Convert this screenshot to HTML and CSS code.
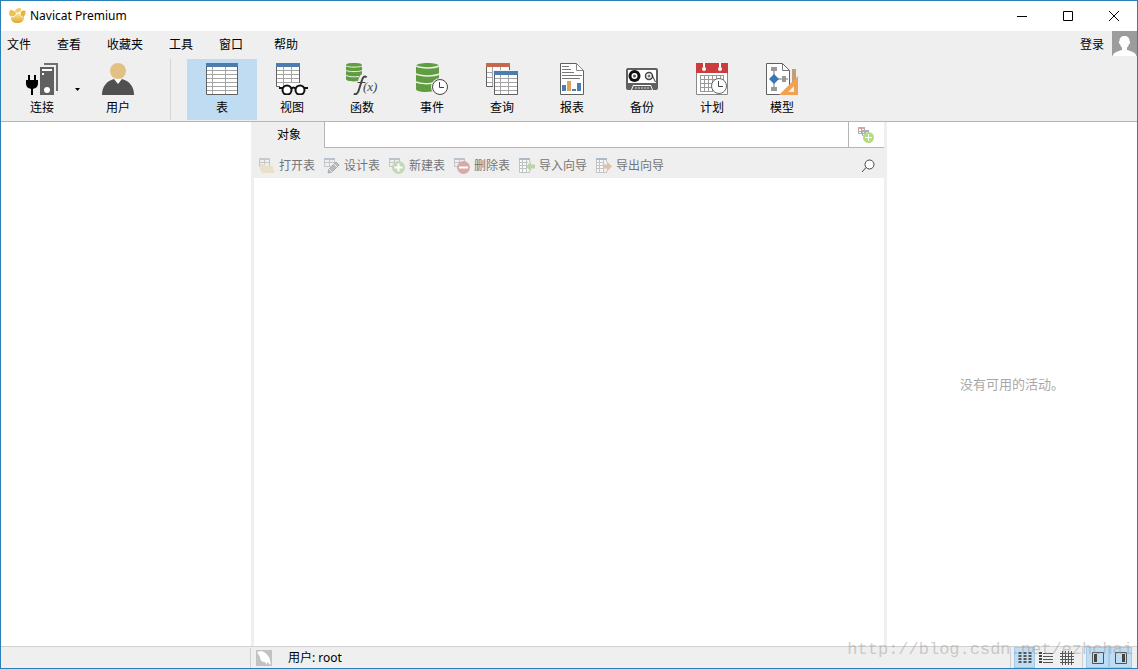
FILE: index.html
```html
<!DOCTYPE html>
<html lang="zh-CN">
<head>
<meta charset="utf-8">
<title>Navicat Premium</title>
<link rel="stylesheet" href="styles.css">
</head>
<body>
<div class="window">
  <header class="titlebar">
    <svg class="app-icon" width="18" height="18" viewBox="0 0 18 18"><defs><linearGradient id="gold" x1="0" y1="0" x2="0" y2="1"><stop offset="0" stop-color="#f8e29a"/><stop offset="1" stop-color="#dfa92c"/></linearGradient></defs><path d="M3 11c0-3 2-4.500 6-4.500s7 1 7 4-2 5.500-6.500 5.500S3 14 3 11z" fill="url(#gold)"/><path d="M2.500 9.500C.500 8 .500 4.500 2.500 3c3 0 5.500 2 5.500 4-1 2-3 2.500-5.500 2.500z" fill="#edc252"/><path d="M7 4C8 1.500 11 .500 13 1.500c.500 2.500-1.500 4-4 4C8 5.500 7 5 7 4z" fill="#f1cd67"/><path d="M12.500 6c.500-2.500 3-3 5-2 .500 2.500-.500 5-2.500 6-2-.500-3-2-2.500-4z" fill="#e5b440"/><path d="M3 9.700c3 .300 5-1 5.500-2.700M12 6c0 2 1 3.500 3 4.500" fill="none" stroke="#fff8dd"/></svg>
    <h1 class="app-title">Navicat Premium</h1>
    <div class="window-controls">
      <button class="window-button" aria-label="最小化"><svg width="12" height="12" viewBox="0 0 12 12"><path d="M1 6.500h10" stroke="#000"/></svg></button>
      <button class="window-button" aria-label="最大化"><svg width="12" height="12" viewBox="0 0 12 12"><path d="M1.500 1.500h9v9h-9z" fill="none" stroke="#000"/></svg></button>
      <button class="window-button" aria-label="关闭"><svg width="12" height="12" viewBox="0 0 12 12"><path d="M1 1l10 10M11 1L1 11" stroke="#000"/></svg></button>
    </div>
  </header>

  <nav class="menubar">
    <button class="menu">文件</button>
    <button class="menu">查看</button>
    <button class="menu">收藏夹</button>
    <button class="menu">工具</button>
    <button class="menu">窗口</button>
    <button class="menu menu-help">帮助</button>
    <button class="login">登录</button>
    <svg class="avatar" width="25" height="25" viewBox="0 0 25 25"><path fill="#9c9c9c" d="M0 0h25v25H0z"/><path d="M7.500 10C7.500 6.500 9.500 5 12.500 5s5 1.500 5 5c1.200 1 .500 3-.500 3-.500 2-1 3-2 3.500V19c3 1 8 1.500 9.500 6h-24C2 20.500 7 20 10 19v-2.500c-1-.500-1.500-1.500-2-3.500-1 0-1.700-2-.500-3z" fill="#fff"/></svg>
  </nav>

  <div class="toolbar">
    <button class="tool">
      <svg width="32" height="32" viewBox="0 0 32 32"><path d="M18 1h13v27" fill="none" stroke="#707070" stroke-width="2"/><path fill="#606060" d="M14 4h14v28H14z"/><path fill="#fff" d="M16 6h10v2H16zM16 10h2v2h-2z"/><circle cx="21" cy="27" r="3" fill="#fff"/><path d="M2 12h2v5h4v-5h2v5h2v3c0 4-2 5-5 6v6H5v-6c-3-1-5-2-5-6v-3h2z"/></svg>
      <span>连接</span>
    </button>
    <button class="dropdown" aria-label="连接选项"><svg width="5" height="3" viewBox="0 0 5 3"><path d="M0 0h5L2.500 3z"/></svg></button>
    <button class="tool">
      <svg width="32" height="32" viewBox="0 0 32 32"><path fill="#505050" d="M0 32c0-9 5-14 12-16h8c7 2 12 7 12 16z"/><path fill="#fff" d="M12 16h8l-4 5z"/><circle cx="16" cy="8" r="8" fill="#e2c182"/></svg>
      <span>用户</span>
    </button>
    <div class="toolbar-separator"></div>
    <button class="tool tool-active">
      <svg width="32" height="32" viewBox="0 0 32 32"><path fill="#fff" stroke="#606060" d="M.500 2.500h31v29H.500z"/><path stroke="#a5a5a5" d="M6.500 4v27M19.500 4v27M1 7.500h30M1 11.500h30M1 15.500h30M1 19.500h30M1 23.500h30M1 27.500h30"/><path fill="#4c7daf" d="M0 0h32v4H0z"/></svg>
      <span>表</span>
    </button>
    <button class="tool">
      <svg width="32" height="32" viewBox="0 0 32 32"><path fill="#fff" d="M0 2h24v22H0z"/><path d="M7.500 4v19M15.500 4v16M1 7.500h22M1 11.500h22M1 15.500h22M1 19.500h22" stroke="#a5a5a5"/><path d="M.500 3v20.500H4M23.500 3v17" fill="none" stroke="#606060"/><path fill="#4c7daf" d="M0 0h24v4H0z"/><g fill="#fff" stroke="#111" stroke-width="2"><circle cx="11" cy="27" r="4.500"/><circle cx="24" cy="27" r="4.500"/><path d="M3 25h4M15 26c2-2 3-2 5 0M28 25h4" fill="none"/></g></svg>
      <span>视图</span>
    </button>
    <button class="tool">
      <svg width="33" height="32" viewBox="0 0 33 32"><path fill="#609c40" d="M0 2c0-2.700 16-2.700 16 0v9c-2 1-3 3-4 7-6 1-12 0-12-2z"/><path d="M0 3c3 1.500 13 1.500 16 0M0 7.500c3 1.500 13 1.500 16 0M0 12.500c3 1.500 9 1.500 13 1" fill="none" stroke="#efefef"/><path d="M20.500 14.500c-1-2-3.500-1-4.500 2.500l-3.500 11c-1 3-3 4-4.500 2.500" fill="none" stroke="#444" stroke-width="2"/><path d="M11.500 19.500h8" stroke="#444"/><text x="17" y="28" class="formula">(x)</text></svg>
      <span>函数</span>
    </button>
    <button class="tool">
      <svg width="32" height="32" viewBox="0 0 32 32"><path fill="#609c40" d="M0 3c0-4 23-4 23 0v12l-7 7 2 6c-8 2-18 1-18-2z"/><path d="M0 3c4 2.500 19 2.500 23 0M0 11c4 2.500 19 2.500 23 0M0 19c4 2 12 2 17 1" fill="none" stroke="#efefef" stroke-width="1.500"/><circle cx="24" cy="24" r="9" fill="#efefef"/><circle cx="24" cy="24" r="7.500" fill="#fff" stroke="#444"/><path d="M23.500 19v5.500H28" fill="none" stroke="#444"/></svg>
      <span>事件</span>
    </button>
    <button class="tool">
      <svg width="32" height="32" viewBox="0 0 32 32"><path fill="#fff" stroke="#606060" d="M.500 1.500h23v22H.500z"/><path stroke="#a5a5a5" d="M6.500 4v19M14.500 4v19M1 9.500h22M1 14.500h22M1 19.500h22"/><path fill="#c5684e" d="M0 0h24v4H0z"/><path fill="#efefef" d="M7 7h25v25H7z"/><path fill="#fff" stroke="#606060" d="M8.500 9.500h23v22h-23z"/><path stroke="#a5a5a5" d="M14.500 12v19M22.500 12v19M9 15.500h22M9 19.500h22M9 23.500h22M9 27.500h22"/><path fill="#4c7daf" d="M8 8h24v4H8z"/></svg>
      <span>查询</span>
    </button>
    <button class="tool">
      <svg width="24" height="32" viewBox="0 0 24 32"><path fill="#fff" stroke="#606060" d="M.500.500h16l7 7v24H.500z"/><path d="M16.500.500v7h7M17 1l6 6" fill="none" stroke="#888"/><path d="M2 3.500h7M2 6.500h9M2 9.500h12M2 12.500h20M2 15.500h18" stroke="#777"/><path fill="#4c7daf" d="M2 22h4v6H2zM12 26h4v2h-4zM17 20h4v8h-4z"/><path fill="#e2a05c" d="M7 18h4v10H7z"/></svg>
      <span>报表</span>
    </button>
    <button class="tool">
      <svg width="32" height="32" viewBox="0 0 32 32"><rect y="5" width="32" height="22" rx="2" fill="#606060"/><path fill="#fff" d="M2 7h28v13H2z"/><path fill="#fff" d="M5 27l2-5h18l2 5z"/><path fill="#606060" d="M6 27l1.500-4h17l1.500 4z"/><path d="M9 25h15" stroke="#ddd" stroke-dasharray="2 1"/><circle cx="8.500" cy="13" r="6" fill="#111"/><circle cx="8.500" cy="13" r="3" fill="#fff"/><circle cx="8.500" cy="13" r="1.500" fill="#555"/><circle cx="23" cy="13" r="3.500" fill="#fff" stroke="#444" stroke-width="1.500"/><circle cx="23" cy="13" r="1.500" fill="#777"/><path d="M26 12l3.500 7" stroke="#333"/></svg>
      <span>备份</span>
    </button>
    <button class="tool">
      <svg width="32" height="32" viewBox="0 0 32 32"><path fill="#fff" stroke="#888" d="M.500.500h31v31H.500z"/><path fill="#cc3c3d" d="M0 0h32v10H0z"/><path fill="#fff" d="M7 0h2v4H7zM23 0h2v4h-2z"/><circle cx="8" cy="6" r="2" fill="#fff"/><circle cx="24" cy="6" r="2" fill="#fff"/><path d="M4.500 12v17M8.500 12v17M12.500 12v17M16.500 12v17M20.500 12v6M24.500 12v4M27.500 12v5M4 12.500h24M4 16.500h24M4 20.500h13M4 24.500h13M4 28.500h13" stroke="#999"/><circle cx="23" cy="23" r="7.500" fill="#fff" stroke="#666"/><path d="M22.500 18v5.500H27" fill="none" stroke="#444"/></svg>
      <span>计划</span>
    </button>
    <button class="tool">
      <svg width="33" height="32" viewBox="0 0 33 32"><path fill="#fff" stroke="#606060" d="M.500.500h16l7 7v24H.500z"/><path d="M16.500.500v7h7" fill="none" stroke="#777"/><path d="M8 6v22M8 16h14" stroke="#777"/><path fill="#999" d="M5 4h6v4H5zM5 24h6v4H5zM16 13h4v6h-4z"/><path fill="#3976b2" d="M8 11l5 5-5 5-5-5z"/><path fill="#c0a078" d="M26 6h4v14h-4z"/><path fill="#f1a151" d="M13 32L32 13v19z"/><path fill="#efefef" d="M22 29l6-6v6z"/></svg>
      <span>模型</span>
    </button>
  </div>

  <main class="workspace">
    <aside class="connections" aria-label="连接"></aside>
    <section class="objects">
      <div class="tabs">
        <button class="tab">对象</button>
        <div class="tab-space"></div>
        <button class="tab-add" aria-label="新建标签"><svg width="16" height="16" viewBox="0 0 16 16"><path fill="#fff" stroke="#aaa" d="M.500.500h6v6h-6zM4.500 3.500h6v5h-6z"/><path stroke="#aaa" d="M1 4.500h6M3.500 1v5M5 6.500h6M7.500 4v5"/><path stroke="#e1a096" stroke-width="2" d="M0 1h7"/><path stroke="#96b3d0" stroke-width="2" d="M4 4h7"/><circle cx="10.500" cy="10.500" r="5.500" fill="#b5da82"/><path d="M7 10.500h7M10.500 7v7" stroke="#fff"/></svg></button>
      </div>
      <div class="actions">
        <button class="action" disabled><svg width="16" height="16" viewBox="0 0 16 16"><path d="M.500 1.500h10v7H.500zM5.500 1v7M0 4.500h11" fill="none" stroke="#c1c6ca"/><path fill="#c3cbd3" d="M0 0h11v2H0z"/><path fill="#eadfc9" d="M1 6h5l1 2h7v4h1l1 3H3L1 11z"/></svg>打开表</button>
        <button class="action" disabled><svg width="16" height="16" viewBox="0 0 16 16"><path d="M.500 1.500h10v7H.500zM5.500 1v7M0 4.500h11" fill="none" stroke="#c1c6ca"/><path fill="#b8c3ce" d="M0 0h11v2H0z"/><path d="M4 15l1-4 7-7 3 3-7 7z" fill="#bbb" stroke="#aaa"/><path d="M10 6l3 3M5 11l3 3" stroke="#efefef"/></svg>设计表</button>
        <button class="action" disabled><svg width="16" height="16" viewBox="0 0 16 16"><path d="M.500 1.500h10v7H.500zM5.500 1v7M0 4.500h11" fill="none" stroke="#c1c6ca"/><path fill="#b8c3ce" d="M0 0h11v2H0z"/><circle cx="9.500" cy="9.500" r="6.500" fill="#c3d8b6"/><path d="M5.500 9.500h8M9.500 5.500v8" stroke="#fff" stroke-width="2"/></svg>新建表</button>
        <button class="action" disabled><svg width="16" height="16" viewBox="0 0 16 16"><path d="M.500 1.500h10v7H.500zM5.500 1v7M0 4.500h11" fill="none" stroke="#c1c6ca"/><path fill="#b8c3ce" d="M0 0h11v2H0z"/><circle cx="9.500" cy="9.500" r="6.500" fill="#d8a9a9"/><path d="M5 9.500h9" stroke="#fff" stroke-width="2"/></svg>删除表</button>
        <button class="action" disabled><svg width="16" height="16" viewBox="0 0 16 16"><path d="M.500 1.500h10v13H.500zM3.500 1v14M7.500 1v14M0 4.500h10M0 7.500h8M0 10.500h8" fill="#f7f7f7" stroke="#c0c4c7"/><path fill="#aebac6" d="M0 0h11v2H0z"/><path fill="#efefef" d="M9 4h6v9H9z"/><path fill="#bdd1ad" d="M7 8.500L12 3.500v3h4v4h-4v3z"/></svg>导入向导</button>
        <button class="action" disabled><svg width="16" height="16" viewBox="0 0 16 16"><path d="M.500 1.500h10v13H.500zM3.500 1v14M7.500 1v14M0 4.500h10M0 7.500h8M0 10.500h8" fill="#f7f7f7" stroke="#c0c4c7"/><path fill="#aebac6" d="M0 0h11v2H0z"/><path fill="#efefef" d="M8 4h5v9H8z"/><path fill="#e1c1a5" d="M16 8.500L11 3.500v3H7v4h4v3z"/></svg>导出向导</button>
        <button class="search" aria-label="搜索"><svg width="14" height="14" viewBox="0 0 14 14"><circle cx="8.500" cy="5.500" r="4.500" fill="#fff" stroke="#444"/><path d="M5 8.500L1 13" stroke="#444"/></svg></button>
      </div>
    </section>
    <aside class="activity"><p class="empty">没有可用的活动。</p></aside>
  </main>

  <footer class="statusbar">
    <div class="status-space"></div>
    <svg class="status-icon" width="16" height="16" viewBox="0 0 16 16"><path fill="#c2c2c2" d="M0 0h16v16H0z"/><path d="M1 2l4-1c5 1 8 5 9 9l1 5-4-3v3L9 12c-3 0-5-2-5-5z" fill="#fff"/></svg>
    <span class="status-text">用户: root</span>
    <div class="view-modes">
      <button class="mode mode-active" aria-label="图标"><svg width="14" height="12" viewBox="0 0 14 12"><path d="M2 0v12M7 0v12M12 0v12" stroke="#555" stroke-width="3" stroke-dasharray="2 1"/></svg></button>
      <button class="mode" aria-label="列表"><svg width="14" height="12" viewBox="0 0 14 12"><path d="M0 1h3M0 4h3M0 7h3M0 10h3" stroke="#444" stroke-width="2"/><path d="M4 1.500h10M4 4.500h10M4 7.500h10M4 10.500h10" stroke="#555"/></svg></button>
      <button class="mode" aria-label="详细信息"><svg width="14" height="14" viewBox="0 0 14 14"><path d="M2.500 0v14M5.500 0v14M8.500 0v14M11.500 0v14M0 2.500h14M0 5.500h14M0 8.500h14M0 11.500h14" stroke="#555"/></svg></button>
    </div>
    <div class="pane-modes">
      <button class="mode mode-pane" aria-label="左侧窗格"><svg width="12" height="12" viewBox="0 0 12 12"><path d="M.500.500h11v11H.500z" fill="none" stroke="#555"/><path d="M2 2h3v8H2z" fill="#444"/></svg></button>
      <button class="mode mode-pane" aria-label="右侧窗格"><svg width="12" height="12" viewBox="0 0 12 12"><path d="M.500.500h11v11H.500z" fill="none" stroke="#555"/><path d="M7 2h3v8H7z" fill="#444"/></svg></button>
    </div>
  </footer>
  <div class="watermark">http://blog.csdn.net/ezhchai</div>
</div>
</body>
</html>
```
FILE: styles.css
```css
* { box-sizing: border-box; }
body {
  margin: 0;
  font: 12px/16px "Noto Sans", "Noto Sans CJK SC", sans-serif;
  color: #000;
}
button {
  margin: 0;
  padding: 0;
  border: 0;
  background: transparent;
  color: inherit;
  font: inherit;
}
svg { display: block; flex: none; }
.window {
  position: relative;
  display: flex;
  flex-direction: column;
  height: 100vh;
  border: 1px solid #2b7fb8;
  background: #efefef;
}
.titlebar {
  display: flex;
  align-items: center;
  height: 30px;
  padding-left: 7px;
  background: #fff;
}
.app-title { margin: 0 0 0 4px; font-size: 12px; font-weight: 400; }
.window-controls { display: flex; margin-left: auto; }
.window-button { display: grid; place-items: center; width: 46px; height: 28px; }
.menubar {
  display: flex;
  align-items: flex-start;
  gap: 26px;
  height: 26px;
  padding-left: 6px;
}
.menu, .login { padding-top: 6px; }
.menu-help { margin-left: 5px; }
.login { margin-left: auto; }
.avatar { margin-left: -18px; }
.toolbar {
  display: flex;
  height: 65px;
  padding: 2px 0 1px 6px;
  border-bottom: 1px solid #b5b5b5;
}
.tool {
  display: flex;
  flex-direction: column;
  align-items: center;
  gap: 5px;
  width: 70px;
  padding-top: 4px;
}
.tool-active { background: #c0dcf3; }
.dropdown { display: flex; align-items: center; width: 6px; }
.dropdown svg { margin-left: -2px; }
.toolbar-separator { width: 1px; margin: 0 16px 0 17px; background: #d5d5d5; }
.formula { font: italic 13px "Liberation Serif", serif; fill: #444; }
.workspace {
  display: grid;
  grid-template-columns: 250px 1fr 250px;
  gap: 3px;
  flex: 1;
  min-height: 0;
}
.connections, .objects, .activity { background: #fff; }
.tabs { display: flex; height: 26px; }
.tab { width: 70px; background: #efefef; }
.tab-space { flex: 1; border-left: 1px solid #b5b5b5; border-bottom: 1px solid #b5b5b5; }
.tab-add {
  display: grid;
  place-items: center;
  width: 36px;
  padding-right: 2px;
  border-left: 1px solid #b5b5b5;
  border-bottom: 1px solid #b5b5b5;
}
.actions {
  display: flex;
  align-items: center;
  gap: 9px;
  height: 30px;
  padding: 5px 9px 0 5px;
  background: #efefef;
}
.action { display: flex; align-items: center; gap: 4px; color: #757575; }
.search { margin-left: auto; }
.activity { display: grid; place-items: center; }
.empty { margin: 0; font-size: 13px; color: #a8a8a8; }
.statusbar {
  display: flex;
  align-items: center;
  height: 22px;
  padding-right: 5px;
  border-top: 1px solid #d0d0d0;
}
.status-space { width: 250px; height: 20px; border-right: 1px solid #d0d0d0; }
.status-icon { margin-left: 5px; }
.status-text { margin-left: 16px; }
.view-modes, .pane-modes { display: flex; height: 21px; padding-left: 3px; border-left: 1px solid #d0d0d0; }
.view-modes { margin-left: auto; padding-right: 5px; }
.mode { display: grid; place-items: center; width: 21px; }
.mode-active, .mode-pane { background: #c0dcf3; border: 1px solid #9fcdf0; }
.mode-pane { width: 23px; }
.watermark {
  position: absolute;
  right: 4px;
  bottom: 8px;
  font: 17px/20px "Liberation Mono", monospace;
  color: rgba(150, 150, 150, 0.45);
  pointer-events: none;
}
```
